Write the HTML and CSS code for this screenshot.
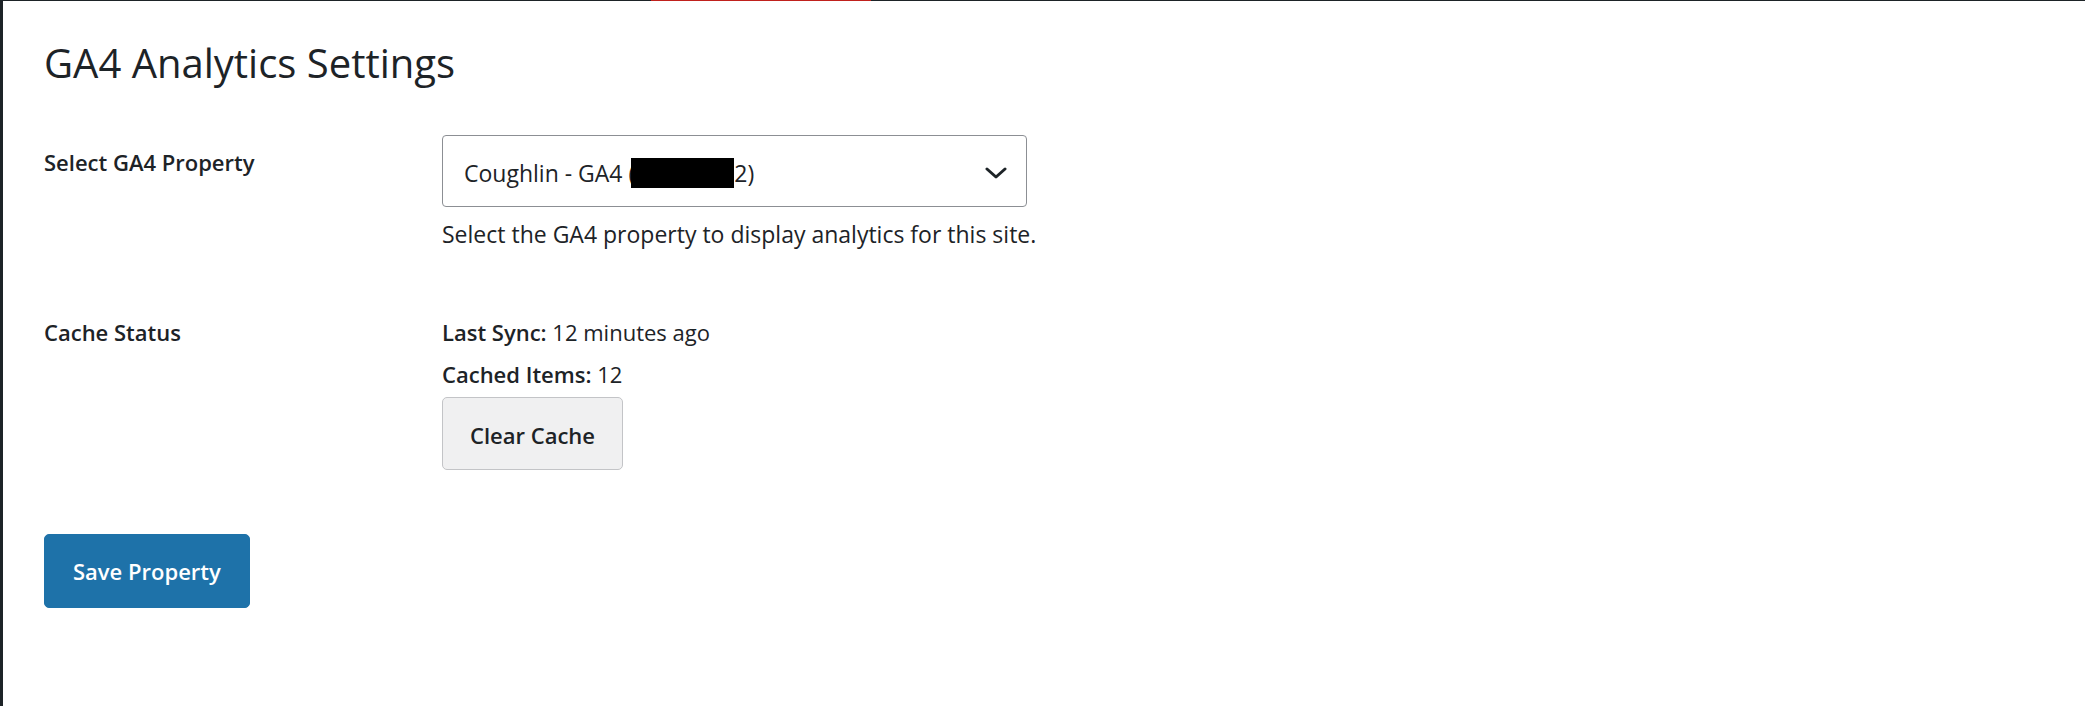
FILE: index.html
```html
<!DOCTYPE html>
<html lang="en">
<head>
  <meta charset="UTF-8">
  <title>GA4 Analytics Settings</title>
  <link rel="stylesheet" href="styles.css">
</head>
<body>
  <div class="topline"><span class="topline-mark"></span></div>

  <div class="wrap">
    <h1>GA4 Analytics Settings</h1>

    <form class="settings" onsubmit="return false">
      <div class="form-row">
        <div class="form-label">Select GA4 Property</div>
        <div class="form-field">
          <div class="select">
            <span>Coughlin - GA4 (</span><span class="redacted"></span><span>2)</span>
            <svg class="chevron" width="22" height="12" viewBox="0 0 22 12">
              <polyline points="2,2 11,10 20,2" fill="none" stroke="#1d2327" stroke-width="3" stroke-linecap="round" stroke-linejoin="round"/>
            </svg>
          </div>
          <p class="description">Select the GA4 property to display analytics for this site.</p>
        </div>
      </div>

      <div class="form-row cache-row">
        <div class="form-label label-flush">Cache Status</div>
        <div class="form-field">
          <p class="status"><strong>Last Sync:</strong> 12 minutes ago</p>
          <p class="status"><strong>Cached Items:</strong> 12</p>
          <button type="button" class="button">Clear Cache</button>
        </div>
      </div>

      <button type="submit" class="button button-primary">Save Property</button>
    </form>
  </div>
</body>
</html>
```

FILE: styles.css
```css
body {
  margin: 0;
  font-family: "Open Sans", "Noto Sans", sans-serif;
  font-size: 22px;
  line-height: 30px;
  color: #1d2327;
  background-color: #fff;
}
.topline {
  height: 1px;
  background-color: #1d2327;
}
.topline-mark {
  display: block;
  width: 220px;
  height: 1px;
  margin-left: 651px;
  background-color: #c0211d;
}
.wrap {
  border-left: 3px solid #1d2327;
  min-height: 705px;
  box-sizing: border-box;
  padding: 36px 0 0 41px;
}
h1 {
  margin: 0;
  font-size: 40px;
  line-height: 52px;
  font-weight: 400;
}
.settings {
  margin-top: 46px;
}
.form-row {
  display: flex;
}
.cache-row {
  margin-top: 68px;
}
.form-label {
  width: 398px;
  flex-shrink: 0;
  padding-top: 12px;
  font-weight: 600;
}
.form-label.label-flush {
  padding-top: 0;
}
.select {
  width: 585px;
  height: 72px;
  box-sizing: border-box;
  border: 1px solid #8c8f94;
  border-radius: 4px;
  padding: 3px 19px 0 21px;
  display: flex;
  align-items: center;
  font-size: 23px;
}
.redacted {
  display: inline-block;
  width: 103px;
  height: 30px;
  margin-left: -4px;
  background-color: #000;
}
.chevron {
  margin-left: auto;
}
.description {
  margin: 12px 0 0;
  font-size: 23px;
}
.status {
  margin: 0 0 12px;
}
.status strong {
  font-weight: 600;
}
.button {
  display: flex;
  align-items: center;
  justify-content: center;
  height: 73px;
  box-sizing: border-box;
  padding: 3px 27px 0;
  margin-top: -4px;
  font-family: inherit;
  font-size: 22px;
  line-height: 30px;
  font-weight: 600;
  color: #1d2327;
  background-color: #f0f0f1;
  border: 1px solid #c3c4c7;
  border-radius: 5px;
  cursor: pointer;
}
.button-primary {
  height: 74px;
  margin-top: 64px;
  padding: 0 28px;
  color: #fff;
  background-color: #1e72a9;
  border-color: #1e72a9;
}
```
